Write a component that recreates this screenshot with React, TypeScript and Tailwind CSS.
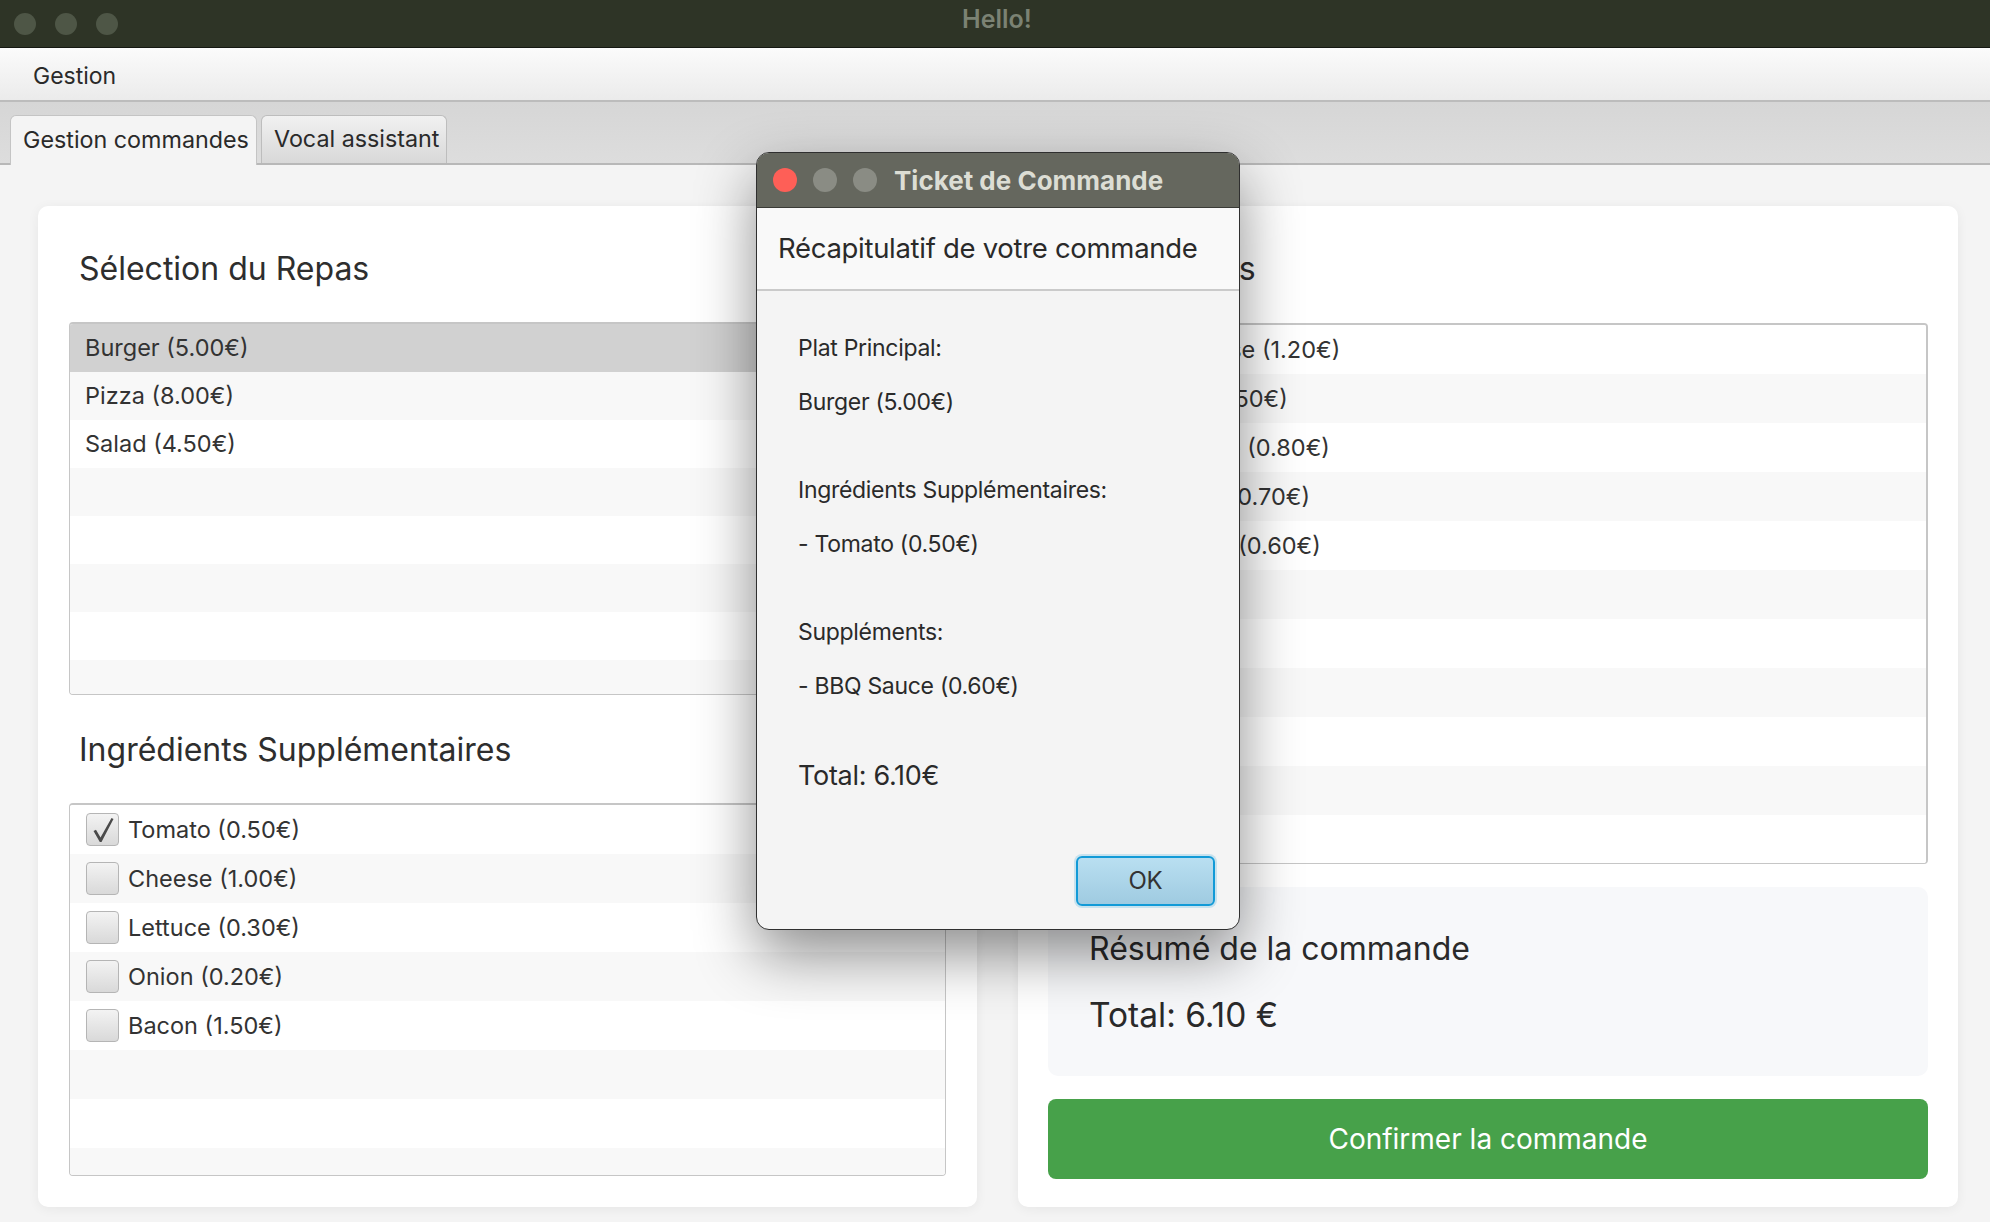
import React from 'react';

const meals = ['Burger (5.00€)', 'Pizza (8.00€)', 'Salad (4.50€)'];

const ingredients = [
  { label: 'Tomato (0.50€)', checked: true },
  { label: 'Cheese (1.00€)', checked: false },
  { label: 'Lettuce (0.30€)', checked: false },
  { label: 'Onion (0.20€)', checked: false },
  { label: 'Bacon (1.50€)', checked: false },
];

const supplements = [
  { label: 'Extra Cheese (1.20€)', checked: false },
  { label: 'Ketchup (0.50€)', checked: false },
  { label: 'Mayonnaise (0.80€)', checked: false },
  { label: 'Hot Sauce (0.70€)', checked: false },
  { label: 'BBQ Sauce (0.60€)', checked: true },
];

const Check: React.FC<{ checked: boolean }> = ({ checked }) => (
  <div className="w-[33px] h-[33px] shrink-0 rounded-[4px] border-[1.5px] border-[#b5b5b5] bg-linear-to-b from-[#f3f3f3] to-[#d9d9d9] flex items-center justify-center">
    {checked && (
      <svg width="26" height="28" viewBox="0 0 26 28">
        <path d="M3.5 15 L6 13.8 L10.5 21.5 L21.5 2 L23.5 3 L11.5 26 L9.8 26 Z" fill="#4a4a4a" />
      </svg>
    )}
  </div>
);

const rowBg = (i: number, selected?: boolean) =>
  selected ? 'bg-[#d1d1d1]' : i % 2 === 0 ? 'bg-white' : 'bg-[#f8f8f8]';

const Light: React.FC<{ color: string; size: string }> = ({ color, size }) => (
  <div className={`${size} rounded-full ${color}`} />
);

const Title: React.FC<{ children: React.ReactNode; className?: string }> = ({ children, className = '' }) => (
  <h2 className={`h-[46px] leading-[46px] pl-[10px] text-[32px] text-[#2e2e2e] ${className}`}>{children}</h2>
);

export default function App() {
  return (
    <div className="relative w-[1990px] h-[1222px] overflow-hidden bg-[#f4f4f4] font-['Inter',sans-serif] text-[#333]">
      {/* window title bar */}
      <div className="h-[48px] bg-[#2e3426] border-b border-[#151812] flex items-center px-[14px]">
        <div className="flex gap-[19px]">
          <Light color="bg-[#4e5646]" size="w-[22px] h-[22px]" />
          <Light color="bg-[#4e5646]" size="w-[22px] h-[22px]" />
          <Light color="bg-[#4e5646]" size="w-[22px] h-[22px]" />
        </div>
        <div className="flex-1 text-center text-[25px] font-semibold text-[#7b8273] pr-[100px] mb-[8px]">Hello!</div>
      </div>

      {/* menu bar */}
      <div className="h-[54px] bg-linear-to-b from-[#fbfbfb] to-[#ebebeb] border-b-2 border-[#bcbcbc] flex items-center px-[33px] pt-[5px] text-[23px] text-[#2a2a2a]">
        Gestion
      </div>

      {/* tabs */}
      <div className="h-[63px] bg-linear-to-b from-[#d6d6d6] to-[#dddddd] border-b-2 border-[#b8b8b8] flex items-end px-[10px] gap-[4px]">
        <div className="h-[50px] w-[247px] -mb-[2px] bg-[#f4f4f4] border border-b-0 border-[#c4c4c4] rounded-t-[6px] pl-[12px] flex items-center whitespace-nowrap text-[23.3px] text-[#2a2a2a]">
          Gestion commandes
        </div>
        <div className="h-[48px] w-[186px] bg-linear-to-b from-[#f1f1f1] to-[#d8d8d8] border border-b-0 border-[#bdbdbd] rounded-t-[6px] pl-[12px] flex items-center whitespace-nowrap text-[23.3px] text-[#2a2a2a]">
          Vocal assistant
        </div>
      </div>

      {/* content */}
      <div className="flex pl-[38px] pr-[32px] pt-[41px] gap-[41px]">
        {/* left card */}
        <div className="w-[939px] h-[1001px] bg-white rounded-[10px] shadow-[0_2px_12px_rgba(0,0,0,0.06)] px-[31px] pt-[40px] pb-[31px] flex flex-col">
          <Title>Sélection du Repas</Title>
          <div className="mt-[30px] h-[373px] rounded-[4px] border border-t-2 border-[#c6c6c6] overflow-hidden">
            {Array.from({ length: 8 }).map((_, i) => (
              <div key={i} className={`h-[48px] flex items-center px-[15px] text-[23.5px] ${rowBg(i, i === 0)}`}>
                {meals[i] ?? ''}
              </div>
            ))}
          </div>
          <Title className="mt-[32px]">Ingrédients Supplémentaires</Title>
          <div className="mt-[30px] h-[373px] rounded-[4px] border border-t-2 border-[#c6c6c6] overflow-hidden">
            {Array.from({ length: 8 }).map((_, i) => {
              const it = ingredients[i];
              return (
                <div key={i} className={`h-[49px] flex items-center gap-[9px] px-[16px] text-[23.5px] ${rowBg(i)}`}>
                  {it && <Check checked={it.checked} />}
                  {it && <span>{it.label}</span>}
                </div>
              );
            })}
          </div>
        </div>

        {/* right card */}
        <div className="flex-1 h-[1001px] bg-white rounded-[10px] shadow-[0_2px_12px_rgba(0,0,0,0.06)] px-[30px] pt-[40px] pb-[28px] flex flex-col">
          <Title>Suppléments</Title>
          <div className="mt-[31px] h-[541px] rounded-[4px] border border-t-2 border-r-2 border-[#c6c6c6] overflow-hidden">
            {Array.from({ length: 12 }).map((_, i) => {
              const it = supplements[i];
              return (
                <div key={i} className={`h-[49px] flex items-center gap-[9px] px-[16px] text-[23.5px] ${rowBg(i)}`}>
                  {it && <Check checked={it.checked} />}
                  {it && <span>{it.label}</span>}
                </div>
              );
            })}
          </div>
          <div className="mt-[23px] h-[189px] rounded-[10px] bg-[#f7f8fa] pl-[41px] pt-[39px]">
            <div className="h-[46px] leading-[46px] text-[32px] text-[#2a2a2a]">Résumé de la commande</div>
            <div className="mt-[20px] h-[46px] leading-[46px] text-[33.5px] text-[#2a2a2a]">Total: 6.10 €</div>
          </div>
          <button className="mt-[23px] h-[80px] rounded-[8px] bg-[#47a14a] text-white text-[28px] flex items-center justify-center">
            Confirmer la commande
          </button>
        </div>
      </div>

      {/* ticket dialog */}
      <div className="absolute left-[756px] top-[152px] w-[484px] h-[778px] rounded-[13px] border border-[#2f2f2f] bg-[#f4f4f4] overflow-hidden shadow-[0_24px_60px_rgba(0,0,0,0.45)] flex flex-col">
        <div className="h-[55px] shrink-0 bg-[#65675e] border-b border-[#3a3b36] flex items-center pl-[16px]">
          <div className="flex gap-[16px]">
            <Light color="bg-[#fe5f57]" size="w-[24px] h-[24px]" />
            <Light color="bg-[#8a8c84]" size="w-[24px] h-[24px]" />
            <Light color="bg-[#8a8c84]" size="w-[24px] h-[24px]" />
          </div>
          <div className="ml-[17px] text-[26px] font-bold text-[#dcddd4]">Ticket de Commande</div>
        </div>
        <div className="h-[83px] shrink-0 bg-[#f9f9f9] border-b-2 border-[#cacaca] flex items-center px-[21px] text-[27.5px] text-[#2a2a2a] tracking-[-0.3px]">
          Récapitulatif de votre commande
        </div>
        <div className="flex-1 px-[41px] pt-[30px] text-[23px] text-[#2a2a2a] tracking-[-0.3px]">
          <div className="h-[54px] leading-[54px]">Plat Principal:</div>
          <div className="h-[54px] leading-[54px]">Burger (5.00€)</div>
          <div className="mt-[34px] h-[54px] leading-[54px]">Ingrédients Supplémentaires:</div>
          <div className="h-[54px] leading-[54px]">- Tomato (0.50€)</div>
          <div className="mt-[34px] h-[54px] leading-[54px]">Suppléments:</div>
          <div className="h-[54px] leading-[54px]">- BBQ Sauce (0.60€)</div>
          <div className="mt-[36px] h-[54px] leading-[54px] text-[27px]">Total: 6.10€</div>
          <div className="mt-[53px] flex justify-end -mr-[17px]">
            <button className="w-[139px] h-[50px] rounded-[6px] border-2 border-[#129ad7] bg-linear-to-b from-[#b9dff1] to-[#9fcbe1] shadow-[0_0_0_2px_rgba(18,154,215,0.2)] text-[24px] text-[#333]">
              OK
            </button>
          </div>
        </div>
      </div>
    </div>
  );
}
